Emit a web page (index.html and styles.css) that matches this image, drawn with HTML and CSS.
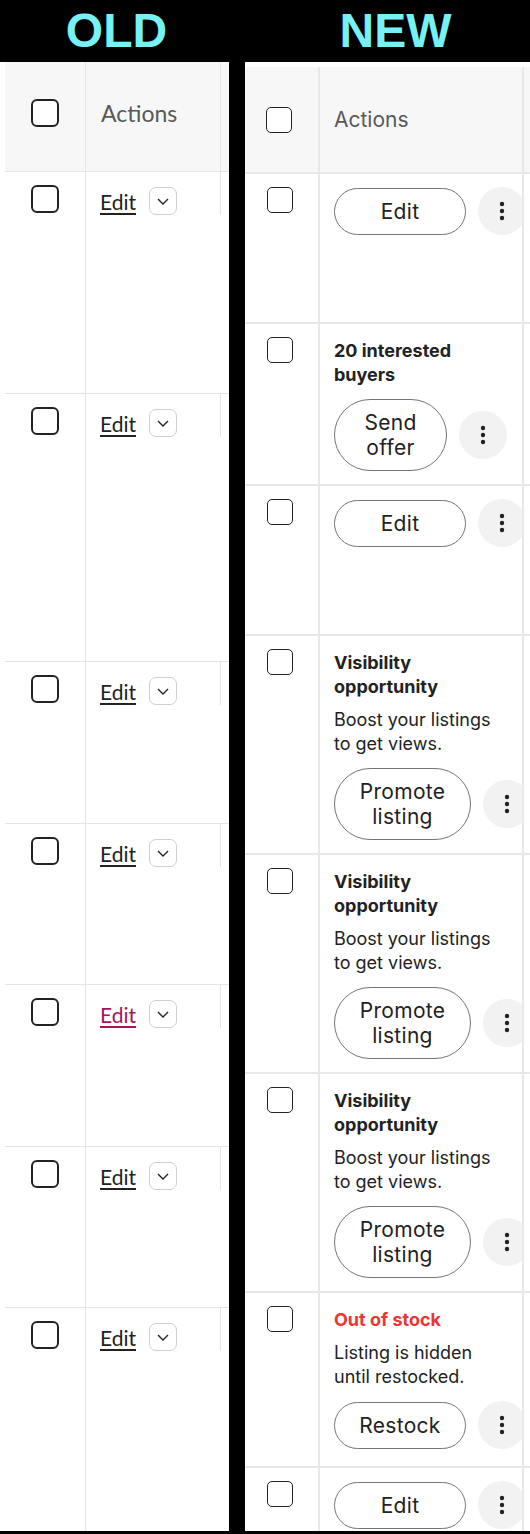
FILE: index.html
```html
<!DOCTYPE html>
<html lang="en">
<head>
    <meta charset="UTF-8">
    <meta name="viewport" content="width=device-width, initial-scale=1.0">
    <title>Listing actions: old vs new</title>
    <link rel="stylesheet" href="styles.css">
</head>
<body>
    <div class="labels">
        <div class="label label-old">OLD</div>
        <div class="label label-new">NEW</div>
    </div>

    <div class="panels">
        <!-- old table -->
        <section class="panel panel-old">
            <div class="old-row old-head">
                <div class="cell cell-check"><span class="box"></span></div>
                <div class="cell cell-actions">Actions</div>
                <div class="cell"></div>
            </div>
            <div class="old-row">
                <div class="cell cell-check"><span class="box"></span></div>
                <div class="cell cell-actions"><a class="edit-link" href="#">Edit</a><button class="drop"><svg width="12" height="12" viewBox="0 0 12 12"><path d="M1 4l5 5 5-5" /></svg></button></div>
                <div class="cell"></div>
            </div>
            <div class="old-row">
                <div class="cell cell-check"><span class="box"></span></div>
                <div class="cell cell-actions"><a class="edit-link" href="#">Edit</a><button class="drop"><svg width="12" height="12" viewBox="0 0 12 12"><path d="M1 4l5 5 5-5" /></svg></button></div>
                <div class="cell"></div>
            </div>
            <div class="old-row">
                <div class="cell cell-check"><span class="box"></span></div>
                <div class="cell cell-actions"><a class="edit-link" href="#">Edit</a><button class="drop"><svg width="12" height="12" viewBox="0 0 12 12"><path d="M1 4l5 5 5-5" /></svg></button></div>
                <div class="cell"></div>
            </div>
            <div class="old-row">
                <div class="cell cell-check"><span class="box"></span></div>
                <div class="cell cell-actions"><a class="edit-link" href="#">Edit</a><button class="drop"><svg width="12" height="12" viewBox="0 0 12 12"><path d="M1 4l5 5 5-5" /></svg></button></div>
                <div class="cell"></div>
            </div>
            <div class="old-row">
                <div class="cell cell-check"><span class="box"></span></div>
                <div class="cell cell-actions"><a class="edit-link edit-link-hover" href="#">Edit</a><button class="drop"><svg width="12" height="12" viewBox="0 0 12 12"><path d="M1 4l5 5 5-5" /></svg></button></div>
                <div class="cell"></div>
            </div>
            <div class="old-row">
                <div class="cell cell-check"><span class="box"></span></div>
                <div class="cell cell-actions"><a class="edit-link" href="#">Edit</a><button class="drop"><svg width="12" height="12" viewBox="0 0 12 12"><path d="M1 4l5 5 5-5" /></svg></button></div>
                <div class="cell"></div>
            </div>
            <div class="old-row">
                <div class="cell cell-check"><span class="box"></span></div>
                <div class="cell cell-actions"><a class="edit-link" href="#">Edit</a><button class="drop"><svg width="12" height="12" viewBox="0 0 12 12"><path d="M1 4l5 5 5-5" /></svg></button></div>
                <div class="cell"></div>
            </div>
        </section>

        <!-- new table -->
        <section class="panel panel-new">
            <div class="new-row new-head">
                <div class="cell ncheck"><span class="nbox"></span></div>
                <div class="cell nactions">Actions</div>
                <div class="cell"></div>
            </div>
            <div class="new-row">
                <div class="cell ncheck"><span class="nbox"></span></div>
                <div class="cell nactions">
                    <div class="btn-row">
                        <button class="pill">Edit</button>
                        <button class="kebab"><svg width="24" height="24" viewBox="0 0 24 24"><circle cx="12" cy="5" r="2.2" /><circle cx="12" cy="12" r="2.2" /><circle cx="12" cy="19" r="2.2" /></svg></button>
                    </div>
                </div>
                <div class="cell"></div>
            </div>
            <div class="new-row">
                <div class="cell ncheck"><span class="nbox"></span></div>
                <div class="cell nactions">
                    <p class="note-title">20 interested buyers</p>
                    <div class="btn-row">
                        <button class="pill pill-offer">Send offer</button>
                        <button class="kebab"><svg width="24" height="24" viewBox="0 0 24 24"><circle cx="12" cy="5" r="2.2" /><circle cx="12" cy="12" r="2.2" /><circle cx="12" cy="19" r="2.2" /></svg></button>
                    </div>
                </div>
                <div class="cell"></div>
            </div>
            <div class="new-row">
                <div class="cell ncheck"><span class="nbox"></span></div>
                <div class="cell nactions">
                    <div class="btn-row">
                        <button class="pill">Edit</button>
                        <button class="kebab"><svg width="24" height="24" viewBox="0 0 24 24"><circle cx="12" cy="5" r="2.2" /><circle cx="12" cy="12" r="2.2" /><circle cx="12" cy="19" r="2.2" /></svg></button>
                    </div>
                </div>
                <div class="cell"></div>
            </div>
            <div class="new-row">
                <div class="cell ncheck"><span class="nbox"></span></div>
                <div class="cell nactions">
                    <p class="note-title">Visibility opportunity</p>
                    <p class="note">Boost your listings to get views.</p>
                    <div class="btn-row">
                        <button class="pill pill-promote">Promote listing</button>
                        <button class="kebab"><svg width="24" height="24" viewBox="0 0 24 24"><circle cx="12" cy="5" r="2.2" /><circle cx="12" cy="12" r="2.2" /><circle cx="12" cy="19" r="2.2" /></svg></button>
                    </div>
                </div>
                <div class="cell"></div>
            </div>
            <div class="new-row">
                <div class="cell ncheck"><span class="nbox"></span></div>
                <div class="cell nactions">
                    <p class="note-title">Visibility opportunity</p>
                    <p class="note">Boost your listings to get views.</p>
                    <div class="btn-row">
                        <button class="pill pill-promote">Promote listing</button>
                        <button class="kebab"><svg width="24" height="24" viewBox="0 0 24 24"><circle cx="12" cy="5" r="2.2" /><circle cx="12" cy="12" r="2.2" /><circle cx="12" cy="19" r="2.2" /></svg></button>
                    </div>
                </div>
                <div class="cell"></div>
            </div>
            <div class="new-row">
                <div class="cell ncheck"><span class="nbox"></span></div>
                <div class="cell nactions">
                    <p class="note-title">Visibility opportunity</p>
                    <p class="note">Boost your listings to get views.</p>
                    <div class="btn-row">
                        <button class="pill pill-promote">Promote listing</button>
                        <button class="kebab"><svg width="24" height="24" viewBox="0 0 24 24"><circle cx="12" cy="5" r="2.2" /><circle cx="12" cy="12" r="2.2" /><circle cx="12" cy="19" r="2.2" /></svg></button>
                    </div>
                </div>
                <div class="cell"></div>
            </div>
            <div class="new-row row-stock">
                <div class="cell ncheck"><span class="nbox"></span></div>
                <div class="cell nactions">
                    <p class="note-title alert">Out of stock</p>
                    <p class="note">Listing is hidden until restocked.</p>
                    <div class="btn-row">
                        <button class="pill">Restock</button>
                        <button class="kebab"><svg width="24" height="24" viewBox="0 0 24 24"><circle cx="12" cy="5" r="2.2" /><circle cx="12" cy="12" r="2.2" /><circle cx="12" cy="19" r="2.2" /></svg></button>
                    </div>
                </div>
                <div class="cell"></div>
            </div>
            <div class="new-row">
                <div class="cell ncheck"><span class="nbox"></span></div>
                <div class="cell nactions">
                    <div class="btn-row">
                        <button class="pill">Edit</button>
                        <button class="kebab"><svg width="24" height="24" viewBox="0 0 24 24"><circle cx="12" cy="5" r="2.2" /><circle cx="12" cy="12" r="2.2" /><circle cx="12" cy="19" r="2.2" /></svg></button>
                    </div>
                </div>
                <div class="cell"></div>
            </div>
        </section>
    </div>
</body>
</html>
```

FILE: styles.css
```css
body {
    margin: 0;
    width: 530px;
    height: 1534px;
    overflow: hidden;
    background-color: #000;
    font-family: Inter, "Liberation Sans", sans-serif;
    color: #222;
}
.labels,
.panels {
    display: grid;
    grid-template-columns: 229px 285px;
    column-gap: 16px;
}
.labels {
    height: 62px;
}
.label {
    font-family: "Liberation Sans", Arial, sans-serif;
    font-weight: 700;
    font-size: 48px;
    line-height: 62px;
    color: #76f1f4;
    text-align: center;
}
.label-old {
    padding-left: 4px;
}
.label-new {
    padding-left: 16px;
}
.panels {
    height: 1469px;
}
.panel {
    background-color: #fff;
    overflow: hidden;
    display: flex;
    flex-direction: column;
}

/* old */
.panel-old {
    padding-left: 5px;
    font-family: Lato, "Liberation Sans", sans-serif;
}
.old-row {
    display: grid;
    grid-template-columns: 81px 135px 8px;
    box-sizing: border-box;
    border-bottom: 1px solid #e4e4e4;
    flex-shrink: 0;
}
.old-row .cell {
    border-right: 1px solid #e4e4e4;
}
.old-row .cell:last-child {
    border-right: none;
}
.old-row:nth-child(2) { height: 222px; }
.old-row:nth-child(3) { height: 268px; }
.old-row:nth-child(4) { height: 162px; }
.old-row:nth-child(5) { height: 161px; }
.old-row:nth-child(6) { height: 162px; }
.old-row:nth-child(7) { height: 161px; }
.old-row:last-child {
    flex-grow: 1;
    border-bottom: none;
}
.old-head {
    height: 110px;
    background-color: #f7f7f7;
}
.cell-check {
    display: flex;
    justify-content: center;
    align-items: flex-start;
    padding-top: 13px;
}
.box {
    width: 28px;
    height: 28px;
    box-sizing: border-box;
    border: 2px solid #222;
    border-radius: 6px;
    background-color: #fff;
}
.cell-actions {
    display: flex;
    align-items: center;
    align-self: start;
    gap: 13px;
    padding: 15px 0 0 14px;
}
.old-head .cell {
    display: flex;
    align-items: center;
    align-self: stretch;
    padding-top: 0;
    padding-bottom: 8px;
}
.old-head .cell-actions {
    padding-left: 15px;
    font-size: 23px;
    color: #595959;
}
.edit-link {
    font-size: 21px;
    color: #222;
    text-decoration: underline;
    text-decoration-thickness: 2px;
    text-underline-offset: 3px;
}
.edit-link-hover {
    color: #a3155e;
}
.drop {
    width: 28px;
    height: 28px;
    padding: 0;
    border: 1px solid #cfcfcf;
    border-radius: 7px;
    background-color: #fff;
    display: flex;
    justify-content: center;
    align-items: center;
}
.drop path {
    fill: none;
    stroke: #222;
    stroke-width: 1.4;
}

/* new */
.panel-new {
    padding-top: 5px;
}
.new-row {
    display: grid;
    grid-template-columns: 75px 204px 6px;
    box-sizing: border-box;
    min-height: 150px;
    border-bottom: 2px solid #e8e8e8;
    flex-shrink: 0;
}
.new-row .cell {
    border-right: 2px solid #e8e8e8;
}
.new-row .cell:last-child {
    border-right: none;
}
.new-head {
    min-height: 0;
    height: 107px;
    background-color: #f7f7f7;
}
.row-stock {
    min-height: 175px;
}
.ncheck {
    padding: 13px 0 0 22px;
}
.nbox {
    display: block;
    width: 26px;
    height: 26px;
    box-sizing: border-box;
    border: 1.5px solid #222;
    border-radius: 5px;
    background-color: #fff;
}
.nactions {
    min-width: 0;
    overflow: hidden;
    padding: 13px 16px 13px 14px;
}
.new-head .cell {
    display: flex;
    align-items: center;
    padding: 0;
}
.new-head .ncheck {
    padding-left: 21px;
}
.new-head .nactions {
    padding-left: 14px;
    font-size: 21px;
    color: #595959;
}
.note-title {
    margin: 0 0 9px;
    font-size: 18px;
    line-height: 24px;
    font-weight: 700;
}
.note-title:first-child {
    margin-top: 2px;
}
.note {
    margin: 0;
    font-size: 18px;
    line-height: 24px;
}
.alert {
    color: #ef3434;
}
.btn-row {
    display: flex;
    align-items: center;
    gap: 12px;
    margin-top: 12px;
}
.btn-row:first-child {
    margin-top: 0;
}
.pill {
    flex-shrink: 0;
    width: 132px;
    box-sizing: border-box;
    padding: 10px 8px;
    border: 1.5px solid #757575;
    border-radius: 999px;
    background-color: #fff;
    font-family: Inter, "Liberation Sans", sans-serif;
    font-size: 21px;
    letter-spacing: 0.3px;
    line-height: 25px;
    color: #222;
    text-align: center;
}
.pill-offer {
    width: 113px;
}
.pill-promote {
    width: 137px;
}
.kebab {
    flex-shrink: 0;
    width: 48px;
    height: 48px;
    padding: 0;
    border: none;
    border-radius: 50%;
    background-color: #f2f2f2;
    display: flex;
    justify-content: center;
    align-items: center;
}
.kebab circle {
    fill: #222;
}
```
